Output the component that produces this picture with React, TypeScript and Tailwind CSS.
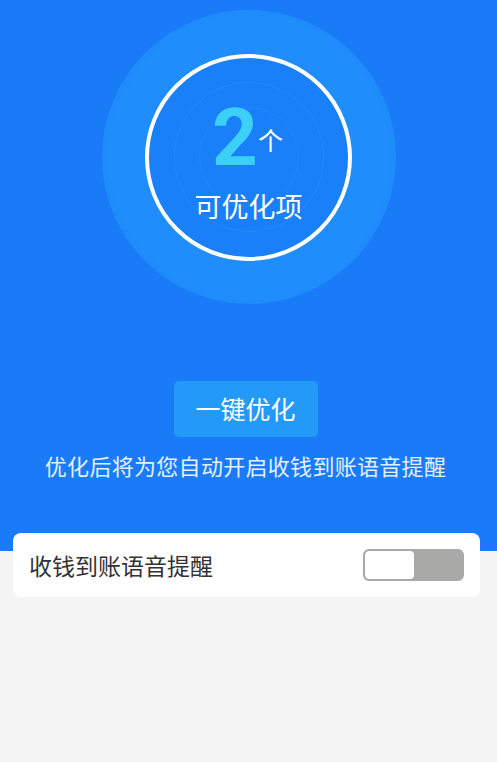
import React from "react";

export default function App() {
  return (
    <div
      className="w-[497px] min-h-[762px] bg-[#f4f4f4]"
      style={{ fontFamily: '"Noto Sans CJK SC", "Noto Sans", sans-serif' }}
    >
      {/* BLUE HEADER */}
      <div className="bg-[#1a7bf9] h-[551px] flex flex-col items-center pt-[10px]">
        <div className="w-[294px] h-[294px] rounded-full flex items-center justify-center bg-[radial-gradient(circle,#1f8dfb_0%,#1f8dfb_66%,#1d86fa_86%,#1a7bf9_100%)]">
          <div className="relative w-[207px] h-[207px] rounded-full border-[4px] border-white bg-[#1a80fa] flex flex-col items-center justify-center overflow-hidden">
            {/* faint rings */}
            <div className="absolute w-[150px] h-[150px] rounded-full border border-[#3a94fb]/40" />
            <div className="absolute w-[100px] h-[100px] rounded-full border border-[#3a94fb]/30" />
            <div className="relative flex items-start mt-[10px] -ml-[2px]">
              <span
                className="text-[#3ccff8] text-[80px] font-bold leading-[64px]"
                style={{ fontFamily: 'Roboto, "Liberation Sans", sans-serif' }}
              >
                2
              </span>
              <span className="text-white text-[25px] leading-none mt-[21px]">个</span>
            </div>
            <div className="relative text-white text-[27px] leading-none mt-[22px]">
              可优化项
            </div>
          </div>
        </div>

        <button className="mt-[77px] w-[144px] h-[56px] rounded-[5px] bg-[#2399f8] text-white text-[25px] -ml-[6px]">
          一键优化
        </button>
        <p className="mt-[13px] text-[#e4efff] text-[22px] leading-[30px] -ml-[6px] tracking-[0.3px]">
          优化后将为您自动开启收钱到账语音提醒
        </p>
      </div>

      {/* SETTINGS CARD */}
      <div className="pl-[13px] pr-[17px] -mt-[18px]">
        <div className="bg-white rounded-[8px] h-[64px] flex items-center justify-between pl-[16px] pr-[16px]">
          <span className="text-[#333333] text-[23px]">收钱到账语音提醒</span>
          <div className="w-[101px] h-[32px] rounded-[6px] border-[2px] border-[#a9aaa7] bg-[#a9aaa7] flex overflow-hidden">
            <div className="w-[49px] h-full bg-white rounded-[4px]" />
          </div>
        </div>
      </div>
    </div>
  );
}
